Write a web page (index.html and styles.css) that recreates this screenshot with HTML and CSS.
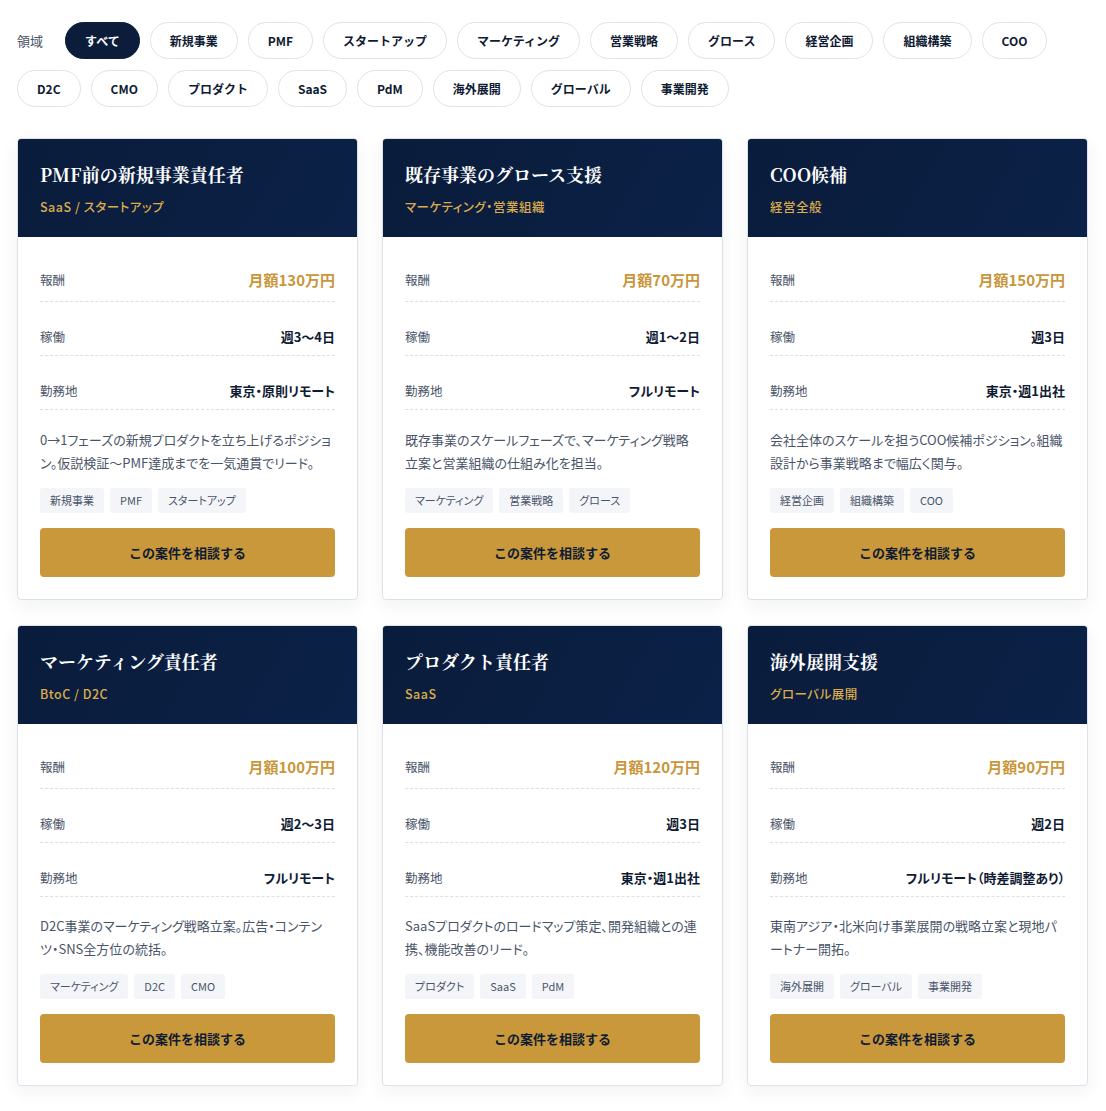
FILE: index.html
```html
<!DOCTYPE html>
<html lang="ja">
<head>
<meta charset="utf-8">
<title>案件一覧</title>
<link rel="stylesheet" href="styles.css">
</head>
<body>
<main class="page">
  <nav class="filters">
    <span class="filters-label">領域</span>
    <button class="chip chip-active">すべて</button>
    <button class="chip">新規事業</button>
    <button class="chip">PMF</button>
    <button class="chip">スタートアップ</button>
    <button class="chip">マーケティング</button>
    <button class="chip">営業戦略</button>
    <button class="chip">グロース</button>
    <button class="chip">経営企画</button>
    <button class="chip">組織構築</button>
    <button class="chip">COO</button>
    <button class="chip">D2C</button>
    <button class="chip">CMO</button>
    <button class="chip">プロダクト</button>
    <button class="chip">SaaS</button>
    <button class="chip">PdM</button>
    <button class="chip">海外展開</button>
    <button class="chip">グローバル</button>
    <button class="chip">事業開発</button>
  </nav>

  <section class="grid">
    <article class="card">
      <header class="card-head">
        <h2 class="card-title">PMF前の新規事業責任者</h2>
        <p class="card-sub">SaaS / スタートアップ</p>
      </header>
      <div class="card-body">
        <dl class="specs">
          <div class="spec spec-pay"><dt>報酬</dt><dd>月額130万円</dd></div>
          <div class="spec"><dt>稼働</dt><dd>週3〜4日</dd></div>
          <div class="spec"><dt>勤務地</dt><dd>東京・原則リモート</dd></div>
        </dl>
        <p class="desc">0→1フェーズの新規プロダクトを立ち上げるポジション。仮説検証〜PMF達成までを一気通貫でリード。</p>
        <ul class="tags"><li>新規事業</li><li>PMF</li><li>スタートアップ</li></ul>
        <a class="cta" href="#">この案件を相談する</a>
      </div>
    </article>

    <article class="card">
      <header class="card-head">
        <h2 class="card-title">既存事業のグロース支援</h2>
        <p class="card-sub">マーケティング・営業組織</p>
      </header>
      <div class="card-body">
        <dl class="specs">
          <div class="spec spec-pay"><dt>報酬</dt><dd>月額70万円</dd></div>
          <div class="spec"><dt>稼働</dt><dd>週1〜2日</dd></div>
          <div class="spec"><dt>勤務地</dt><dd>フルリモート</dd></div>
        </dl>
        <p class="desc">既存事業のスケールフェーズで、マーケティング戦略立案と営業組織の仕組み化を担当。</p>
        <ul class="tags"><li>マーケティング</li><li>営業戦略</li><li>グロース</li></ul>
        <a class="cta" href="#">この案件を相談する</a>
      </div>
    </article>

    <article class="card">
      <header class="card-head">
        <h2 class="card-title">COO候補</h2>
        <p class="card-sub">経営全般</p>
      </header>
      <div class="card-body">
        <dl class="specs">
          <div class="spec spec-pay"><dt>報酬</dt><dd>月額150万円</dd></div>
          <div class="spec"><dt>稼働</dt><dd>週3日</dd></div>
          <div class="spec"><dt>勤務地</dt><dd>東京・週1出社</dd></div>
        </dl>
        <p class="desc">会社全体のスケールを担うCOO候補ポジション。組織設計から事業戦略まで幅広く関与。</p>
        <ul class="tags"><li>経営企画</li><li>組織構築</li><li>COO</li></ul>
        <a class="cta" href="#">この案件を相談する</a>
      </div>
    </article>

    <article class="card">
      <header class="card-head">
        <h2 class="card-title">マーケティング責任者</h2>
        <p class="card-sub">BtoC / D2C</p>
      </header>
      <div class="card-body">
        <dl class="specs">
          <div class="spec spec-pay"><dt>報酬</dt><dd>月額100万円</dd></div>
          <div class="spec"><dt>稼働</dt><dd>週2〜3日</dd></div>
          <div class="spec"><dt>勤務地</dt><dd>フルリモート</dd></div>
        </dl>
        <p class="desc">D2C事業のマーケティング戦略立案。広告・コンテンツ・SNS全方位の統括。</p>
        <ul class="tags"><li>マーケティング</li><li>D2C</li><li>CMO</li></ul>
        <a class="cta" href="#">この案件を相談する</a>
      </div>
    </article>

    <article class="card">
      <header class="card-head">
        <h2 class="card-title">プロダクト責任者</h2>
        <p class="card-sub">SaaS</p>
      </header>
      <div class="card-body">
        <dl class="specs">
          <div class="spec spec-pay"><dt>報酬</dt><dd>月額120万円</dd></div>
          <div class="spec"><dt>稼働</dt><dd>週3日</dd></div>
          <div class="spec"><dt>勤務地</dt><dd>東京・週1出社</dd></div>
        </dl>
        <p class="desc">SaaSプロダクトのロードマップ策定、開発組織との連携、機能改善のリード。</p>
        <ul class="tags"><li>プロダクト</li><li>SaaS</li><li>PdM</li></ul>
        <a class="cta" href="#">この案件を相談する</a>
      </div>
    </article>

    <article class="card">
      <header class="card-head">
        <h2 class="card-title">海外展開支援</h2>
        <p class="card-sub">グローバル展開</p>
      </header>
      <div class="card-body">
        <dl class="specs">
          <div class="spec spec-pay"><dt>報酬</dt><dd>月額90万円</dd></div>
          <div class="spec"><dt>稼働</dt><dd>週2日</dd></div>
          <div class="spec"><dt>勤務地</dt><dd>フルリモート（時差調整あり）</dd></div>
        </dl>
        <p class="desc">東南アジア・北米向け事業展開の戦略立案と現地パートナー開拓。</p>
        <ul class="tags"><li>海外展開</li><li>グローバル</li><li>事業開発</li></ul>
        <a class="cta" href="#">この案件を相談する</a>
      </div>
    </article>
  </section>
</main>
</body>
</html>
```

FILE: styles.css
```css
* {
  box-sizing: border-box;
}

html,
body {
  margin: 0;
  background: #ffffff;
}

body {
  font-family: "Noto Sans CJK JP", "Noto Sans", sans-serif;
  color: #0f1b33;
}

.page {
  padding: 22px 18px 24px 17px;
}

/* Filter chips */
.filters {
  display: flex;
  flex-wrap: wrap;
  align-items: center;
  gap: 11px 10px;
  margin-bottom: 31px;
}

.filters-label {
  font-size: 13px;
  color: #4a5468;
  margin-right: 12px;
}

.chip {
  height: 37px;
  padding: 0 19px;
  border: 1px solid #dfe3ea;
  border-radius: 999px;
  background: #ffffff;
  font-family: inherit;
  font-size: 12px;
  font-weight: 700;
  color: #0f1b33;
  cursor: pointer;
}

.chip-active {
  background: #0b1d3a;
  border-color: #0b1d3a;
  color: #ffffff;
}

/* Card grid */
.grid {
  display: grid;
  grid-template-columns: repeat(3, 1fr);
  gap: 25px 24px;
}

.card {
  background: #ffffff;
  border: 1px solid #dde2ea;
  border-radius: 4px;
  overflow: hidden;
  box-shadow: 0 6px 18px rgba(15, 27, 51, 0.06);
  display: flex;
  flex-direction: column;
}

.card-head {
  background: linear-gradient(120deg, #0a1c3b 0%, #0b2147 100%);
  padding: 22px 22px 20px;
}

.card-title {
  margin: 0;
  font-family: "Noto Serif CJK JP", "Noto Serif JP", "Liberation Serif", serif;
  font-size: 18px;
  font-weight: 700;
  line-height: 27px;
  color: #ffffff;
}

.card-sub {
  margin: 9px 0 0;
  font-size: 12.5px;
  font-weight: 500;
  line-height: 20px;
  letter-spacing: 0.04em;
  font-feature-settings: "palt";
  color: #dcac4a;
}

.card-body {
  padding: 22px 22px 22px;
  display: flex;
  flex-direction: column;
  flex: 1;
}

/* Spec rows */
.specs {
  margin: 0;
  display: flex;
  flex-direction: column;
  gap: 17px;
}

.spec {
  display: flex;
  justify-content: space-between;
  align-items: center;
  padding: 8px 0 8px;
  border-bottom: 1px dashed #dcdfe5;
}

.spec dt {
  font-size: 12.5px;
  line-height: 20px;
  color: #4a5468;
}

.spec dd {
  margin: 0;
  font-size: 13px;
  font-weight: 700;
  line-height: 20px;
  font-feature-settings: "palt";
  color: #0f1b33;
}

.spec-pay dd {
  font-size: 15px;
  line-height: 26px;
  color: #c9963a;
}

.desc {
  margin: 17.5px 0 0;
  font-size: 13px;
  line-height: 23px;
  font-feature-settings: "palt";
  color: #4a5468;
}

.tags {
  list-style: none;
  margin: 14px 0 0;
  padding: 0;
  display: flex;
  flex-wrap: wrap;
  gap: 6px;
}

.tags li {
  height: 25px;
  line-height: 25px;
  padding: 0 10px;
  background: #f3f5f9;
  border-radius: 3px;
  font-size: 11px;
  font-feature-settings: "palt";
  color: #4a5468;
}

.cta {
  margin-top: 15px;
  height: 49px;
  display: flex;
  align-items: center;
  justify-content: center;
  background: #c9983a;
  border-radius: 4px;
  font-size: 13px;
  font-weight: 700;
  color: #0f1b33;
  text-decoration: none;
}
```
